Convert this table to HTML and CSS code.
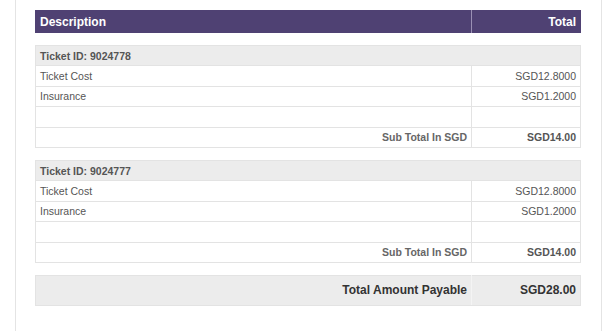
FILE: index.html
```html
<!DOCTYPE html>
<html>
<head>
<meta charset="utf-8">
<link rel="stylesheet" href="styles.css">
</head>
<body>
<div class="panel">
  <table class="head">
    <colgroup><col><col class="c-amt"></colgroup>
    <tr><th class="desc">Description</th><th class="amt">Total</th></tr>
  </table>

  <table class="ticket">
    <colgroup><col><col class="c-amt"></colgroup>
    <tr class="tid"><td colspan="2">Ticket ID: 9024778</td></tr>
    <tr><td class="desc">Ticket Cost</td><td class="amt">SGD12.8000</td></tr>
    <tr><td class="desc">Insurance</td><td class="amt">SGD1.2000</td></tr>
    <tr><td class="desc"></td><td class="amt"></td></tr>
    <tr class="sub"><td class="desc">Sub Total In SGD</td><td class="amt">SGD14.00</td></tr>
  </table>

  <table class="ticket">
    <colgroup><col><col class="c-amt"></colgroup>
    <tr class="tid"><td colspan="2">Ticket ID: 9024777</td></tr>
    <tr><td class="desc">Ticket Cost</td><td class="amt">SGD12.8000</td></tr>
    <tr><td class="desc">Insurance</td><td class="amt">SGD1.2000</td></tr>
    <tr><td class="desc"></td><td class="amt"></td></tr>
    <tr class="sub"><td class="desc">Sub Total In SGD</td><td class="amt">SGD14.00</td></tr>
  </table>

  <table class="grand">
    <colgroup><col><col class="c-amt"></colgroup>
    <tr><td class="desc">Total Amount Payable</td><td class="amt">SGD28.00</td></tr>
  </table>
</div>
</body>
</html>
```
FILE: styles.css
```css
html, body {
  margin: 0;
  padding: 0;
  background: #fff;
  height: 100%;
}
body {
  font-family: "Liberation Sans", Arial, sans-serif;
  font-size: 10.5px;
  color: #555;
}
.panel {
  margin: 0 14px 0 15px;
  border-left: 1px solid #e4e4e4;
  border-right: 1px solid #e4e4e4;
  padding: 10px 19px 0 19px;
  min-height: 100%;
  box-sizing: border-box;
  display: flex;
  flex-direction: column;
  gap: 12px;
}
table {
  width: 546px;
  border-collapse: collapse;
  table-layout: fixed;
}
.c-amt { width: 109px; }
td, th {
  padding: 0 4px;
  white-space: nowrap;
}
.desc { text-align: left; }
.amt { text-align: right; }

.head th {
  background: #4f4173;
  color: #fff;
  font-size: 12px;
  font-weight: bold;
  height: 23px;
  border-left: 1px solid #4f4173;
  border-right: 1px solid #4f4173;
}
.head th.desc {
  border-right: 1px solid #9a90b4;
}

.ticket td {
  border: 1px solid #e3e3e3;
  height: 19.4px;
}
.ticket .tid td {
  background: #ececec;
  font-weight: bold;
}
.ticket .sub td {
  font-weight: bold;
}
.ticket .sub td.desc {
  color: #666;
  text-align: right;
}

.grand td {
  background: #ececec;
  border: 1px solid #e3e3e3;
  height: 29px;
  font-size: 12px;
  font-weight: bold;
  color: #333;
}
.grand td.desc {
  text-align: right;
  border-right: 1px solid #f4f4f4;
}
```
